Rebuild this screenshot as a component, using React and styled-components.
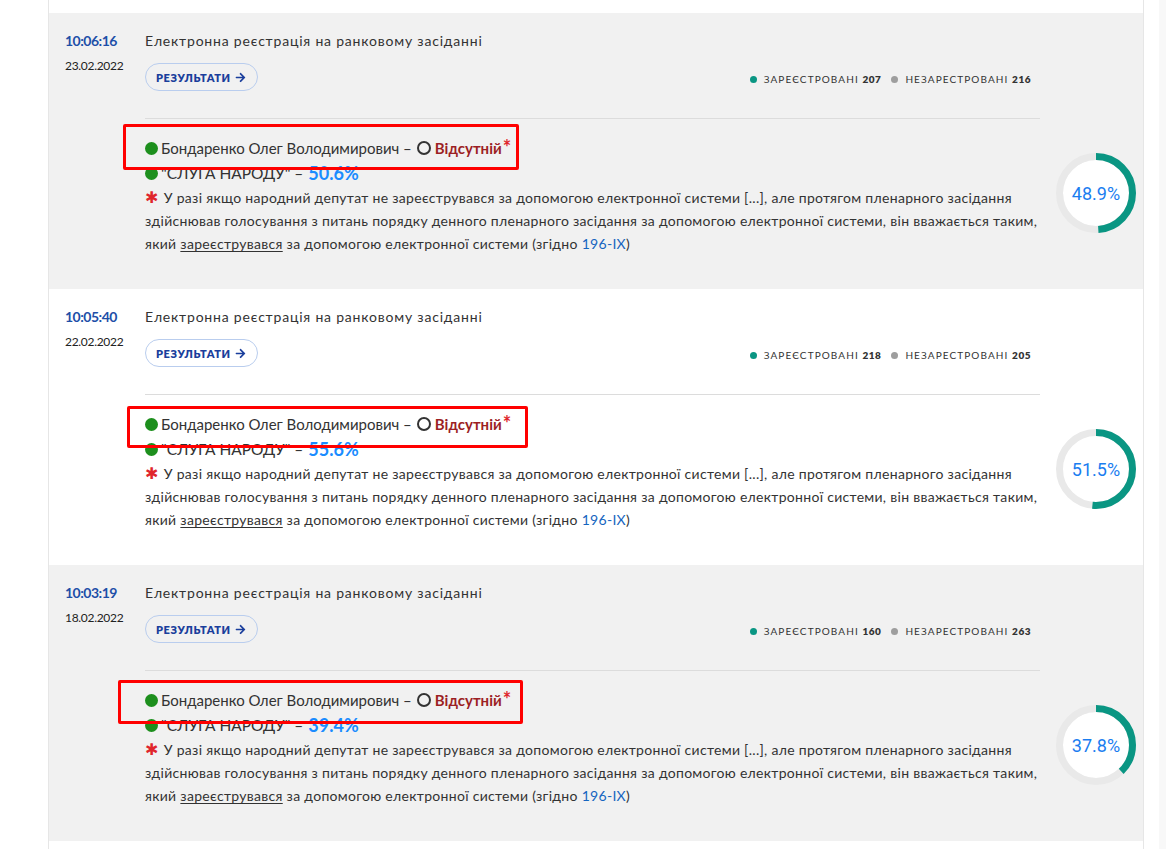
import React from "react";
import styled, { createGlobalStyle } from "styled-components";

const Global = createGlobalStyle`
  html, body { margin: 0; padding: 0; background: #fff; }
  body { font-family: Lato, "Open Sans", sans-serif; color: #333; }
`;

const Page = styled.div`
  display: flex;
  align-items: stretch;
  min-height: 849px;
`;

const Main = styled.div`
  margin-left: 48px;
  width: 1094px;
  border-left: 1px solid #e6e6e6;
  border-right: 1px solid #e6e6e6;
  padding: 13px 0 40px;
`;

const Side = styled.div`
  margin-left: 15px;
  flex: 1;
  background: #f8f8f8;
`;

const Row = styled.div`
  display: grid;
  grid-template-columns: 80px 895px 1fr;
  grid-template-rows: auto 1fr;
  padding: 19px 0 0 16px;
  height: 276px;
  box-sizing: border-box;
  background: ${(p) => (p.$shaded ? "#f1f1f1" : "#fff")};
`;

const TimeCol = styled.div`
  grid-column: 1;
  grid-row: 1 / span 2;
  display: flex;
  flex-direction: column;
  gap: 8px;
`;

const Time = styled.div`
  font-weight: 700;
  font-size: 14px;
  line-height: 18px;
  letter-spacing: -0.5px;
  color: #1d4fa8;
`;

const DateText = styled.div`
  font-size: 12px;
  line-height: 16px;
  letter-spacing: -0.3px;
  color: #222;
`;

const Header = styled.div`
  grid-column: 2;
  grid-row: 1;
  padding-bottom: 27px;
  border-bottom: 1px solid #dcdcdc;
`;

const Title = styled.div`
  font-size: 14px;
  line-height: 18px;
  letter-spacing: 0.8px;
  color: #333;
`;

const HeaderBar = styled.div`
  display: flex;
  align-items: center;
  justify-content: space-between;
  margin-top: 13px;
  padding-right: 9px;
`;

const ResultsButton = styled.button`
  height: 28px;
  padding: 0 11px 0 10px;
  border: 1px solid #b9cdee;
  border-radius: 14px;
  background: transparent;
  font-family: Lato, sans-serif;
  font-weight: 800;
  font-size: 11px;
  letter-spacing: 0.6px;
  color: #1a3e9c;
  display: flex;
  align-items: center;
  gap: 4px;
  cursor: pointer;
`;

const Legend = styled.div`
  display: flex;
  align-items: center;
  gap: 10px;
  margin-top: 4px;
  font-size: 10px;
  letter-spacing: 1.1px;
  color: #333;
`;

const LegendItem = styled.span`
  display: inline-flex;
  align-items: center;
  gap: 7px;
  b { font-weight: 800; letter-spacing: 0.5px; }
`;

const Dot = styled.span`
  width: 7px;
  height: 7px;
  border-radius: 50%;
  background: ${(p) => p.$color};
`;

const Body = styled.div`
  grid-column: 2;
  grid-row: 2;
  position: relative;
  padding-top: 17px;
`;

const Mark = styled.div`
  position: absolute;
  border: 3px solid #f00;
  border-radius: 2px;
  pointer-events: none;
`;

const NameLine = styled.div`
  display: flex;
  align-items: center;
  font-size: 15px;
  line-height: 24px;
  color: #333;
`;

const PartyLine = styled(NameLine)`
  font-size: 15.5px;
  line-height: 24px;
  margin-top: 1px;
`;

const GreenDot = styled.span`
  width: 13px;
  height: 13px;
  border-radius: 50%;
  background: #1d8f1d;
  margin-right: 3px;
`;

const Ring = styled.span`
  width: 10px;
  height: 10px;
  border-radius: 50%;
  border: 2px solid #333;
  margin: 0 4px 0 5px;
`;

const Absent = styled.span`
  font-weight: 700;
  color: #9c1f24;
`;

const Star = styled.span`
  color: #e0262c;
  font-weight: 700;
  font-size: 20px;
  line-height: 1;
  align-self: flex-start;
  margin-top: 1px;
  margin-left: 1px;
`;

const Percent = styled.span`
  font-weight: 700;
  font-size: 18px;
  color: #1a8cff;
  margin-left: 5px;
`;

const Note = styled.p`
  margin: 1px -6px 0 0;
  font-size: 14px;
  line-height: 23px;
  letter-spacing: 0.3px;
  color: #333;
  a { color: #1565c0; text-decoration: none; }
  u { text-decoration: underline; text-underline-offset: 2px; }
`;

const NoteStar = styled.span`
  color: #e0262c;
  font-family: "DejaVu Sans", sans-serif;
  font-weight: 700;
  font-size: 16px;
  margin-right: 5px;
`;

const DonutCell = styled.div`
  grid-column: 3;
  grid-row: 2;
  align-self: start;
  display: grid;
  place-items: center;
  width: 80px;
  height: 80px;
  margin-left: 16px;
  margin-top: ${(p) => p.$top}px;
`;

const DonutSvg = styled.svg`
  grid-area: 1 / 1;
  width: 80px;
  height: 80px;
`;

const DonutLabel = styled.span`
  grid-area: 1 / 1;
  font-family: Roboto, sans-serif;
  font-size: 18px;
  color: #1a7df0;
`;

function Donut({ value, top }) {
  const r = 36.5;
  const c = 2 * Math.PI * r;
  const len = (value / 100) * c;
  return (
    <DonutCell $top={top}>
      <DonutSvg viewBox="0 0 80 80">
        <circle cx="40" cy="40" r="33" fill="#fff" />
        <circle cx="40" cy="40" r={r} fill="none" stroke="#e9e9e9" strokeWidth="7" />
        <circle
          cx="40"
          cy="40"
          r={r}
          fill="none"
          stroke="#0a9683"
          strokeWidth="7"
          strokeDasharray={`${len} ${c}`}
          transform="rotate(-90 40 40)"
        />
      </DonutSvg>
      <DonutLabel>{value}%</DonutLabel>
    </DonutCell>
  );
}

const ArrowIcon = () => (
  <svg width="11" height="11" viewBox="0 0 448 512">
    <path
      d="M190.5 66.9l22.2-22.2c9.4-9.4 24.6-9.4 33.9 0L441 239c9.4 9.4 9.4 24.6 0 33.9L246.6 467.3c-9.4 9.4-24.6 9.4-33.9 0l-22.2-22.2c-9.5-9.5-9.3-25 .4-34.3L311.4 296H24c-13.3 0-24-10.7-24-24v-32c0-13.3 10.7-24 24-24h287.4L190.9 101.2c-9.8-9.3-10-24.8-.4-34.3z"
      fill="#1a3e9c"
    />
  </svg>
);

const rows = [
  { time: "10:06:16", date: "23.02.2022", reg: 207, unreg: 216, party: "50.6", total: 48.9, mark: { left: -22, top: 5, width: 390, height: 40 }, donutTop: 34 },
  { time: "10:05:40", date: "22.02.2022", reg: 218, unreg: 205, party: "55.6", total: 51.5, mark: { left: -18, top: 11, width: 395, height: 36 }, donutTop: 34 },
  { time: "10:03:19", date: "18.02.2022", reg: 160, unreg: 263, party: "39.4", total: 37.8, mark: { left: -27, top: 9, width: 399, height: 38 }, donutTop: 34 },
];

export default function App() {
  return (
    <>
      <Global />
      <Page>
        <Main>
          {rows.map((r, i) => (
            <Row key={r.time} $shaded={i % 2 === 0}>
              <TimeCol>
                <Time>{r.time}</Time>
                <DateText>{r.date}</DateText>
              </TimeCol>
              <Header>
                <Title>Електронна реєстрація на ранковому засіданні</Title>
                <HeaderBar>
                  <ResultsButton>
                    РЕЗУЛЬТАТИ <ArrowIcon />
                  </ResultsButton>
                  <Legend>
                    <LegendItem>
                      <Dot $color="#0a9683" />
                      <span>
                        ЗАРЕЄСТРОВАНІ <b>{r.reg}</b>
                      </span>
                    </LegendItem>
                    <LegendItem>
                      <Dot $color="#9e9e9e" />
                      <span>
                        НЕЗАРЕСТРОВАНІ <b>{r.unreg}</b>
                      </span>
                    </LegendItem>
                  </Legend>
                </HeaderBar>
              </Header>
              <Body>
                <Mark
                  style={{
                    left: r.mark.left,
                    top: r.mark.top,
                    width: r.mark.width,
                    height: r.mark.height,
                  }}
                />
                <NameLine>
                  <GreenDot />
                  Бондаренко Олег Володимирович –<Ring />
                  <Absent>Відсутній</Absent>
                  <Star>*</Star>
                </NameLine>
                <PartyLine>
                  <GreenDot />
                  "СЛУГА НАРОДУ" –<Percent>{r.party}%</Percent>
                </PartyLine>
                <Note>
                  <NoteStar>✱</NoteStar>У разі якщо народний депутат не зареєструвався за допомогою
                  електронної системи [...], але протягом пленарного засідання здійснював голосування з
                  питань порядку денного пленарного засідання за допомогою електронної системи, він
                  вважається таким, який <u>зареєструвався</u> за допомогою електронної системи (згідно{" "}
                  <a href="#">196-IX</a>)
                </Note>
              </Body>
              <Donut value={r.total} top={r.donutTop} />
            </Row>
          ))}
        </Main>
        <Side />
      </Page>
    </>
  );
}
